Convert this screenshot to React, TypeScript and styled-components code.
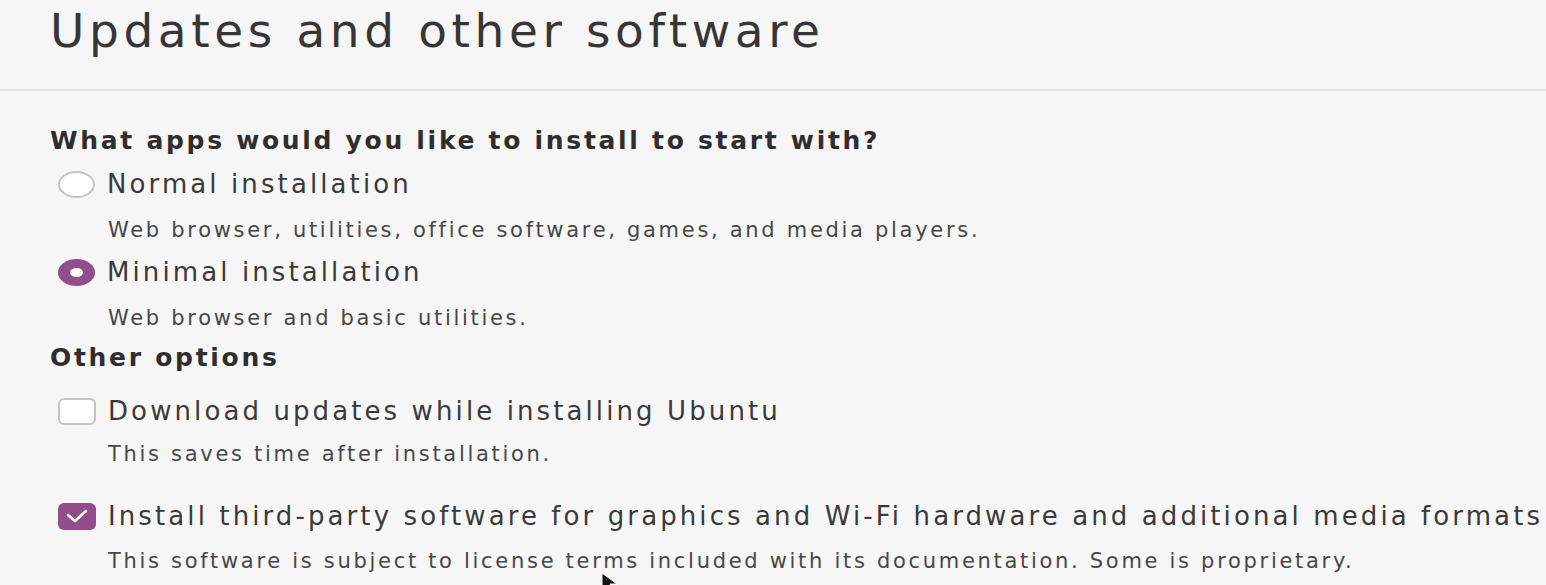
import styled, { createGlobalStyle } from "styled-components";

const GlobalStyle = createGlobalStyle`
  html, body {
    margin: 0;
    padding: 0;
    background: #f6f6f6;
  }
  body {
    font-family: "DejaVu Sans", "Noto Sans", sans-serif;
    color: #3c3c3c;
    overflow: hidden;
  }
`;

const Page = styled.div`
  width: 1546px;
  height: 585px;
  overflow: hidden;
  position: relative;
`;

const Header = styled.header`
  height: 89px;
  border-bottom: 2px solid #e2e2e2;
  padding-left: 50px;
`;

const Title = styled.h1`
  margin: 0;
  font-size: 47px;
  font-weight: 400;
  line-height: 62px;
  letter-spacing: 4.6px;
  color: #363636;
  white-space: nowrap;
`;

const Body = styled.main`
  padding-left: 50px;
  padding-top: 30px;
`;

const SectionTitle = styled.h2<{ $gap?: number }>`
  margin: ${(p) => p.$gap ?? 0}px 0 0;
  font-size: 25px;
  font-weight: 700;
  line-height: 40px;
  letter-spacing: 2.7px;
  color: #2e2e2e;
  white-space: nowrap;
`;

const OptionRow = styled.label<{ $gap?: number }>`
  display: flex;
  align-items: center;
  gap: 12px;
  height: 40px;
  margin-top: ${(p) => p.$gap ?? 0}px;
  padding-left: 8px;
`;

const OptionText = styled.span`
  font-size: 26px;
  line-height: 40px;
  letter-spacing: 3.1px;
  color: #3a3a3a;
  white-space: nowrap;
`;

const Hint = styled.p<{ $gap?: number }>`
  margin: ${(p) => p.$gap ?? 0}px 0 0 58px;
  font-size: 21px;
  line-height: 40px;
  letter-spacing: 2.7px;
  color: #474747;
  white-space: nowrap;
`;

const Radio = styled.span<{ $on?: boolean }>`
  flex: none;
  box-sizing: border-box;
  width: 37px;
  height: 27px;
  border-radius: 50%;
  display: grid;
  place-items: center;
  background: ${(p) => (p.$on ? "#924d8b" : "#ffffff")};
  border: ${(p) => (p.$on ? "none" : "2px solid #c4c4c4")};

  &::after {
    content: "";
    display: ${(p) => (p.$on ? "block" : "none")};
    width: 13px;
    height: 9px;
    border-radius: 50%;
    background: #ffffff;
  }
`;

const Box = styled.span<{ $on?: boolean }>`
  flex: none;
  box-sizing: border-box;
  width: 38px;
  height: 27px;
  border-radius: 6px;
  display: grid;
  place-items: center;
  background: ${(p) => (p.$on ? "#924d8b" : "#ffffff")};
  border: ${(p) => (p.$on ? "none" : "2px solid #c4c4c4")};
`;

const Cursor = styled.svg`
  position: absolute;
  left: 601px;
  top: 572px;
`;

const Check = () => (
  <svg width="24" height="16" viewBox="0 0 24 16">
    <polyline
      points="3,7 10,13 21,3"
      fill="none"
      stroke="#ffffff"
      strokeWidth="2.6"
      strokeLinecap="round"
      strokeLinejoin="round"
    />
  </svg>
);

export default function App() {
  return (
    <Page>
      <GlobalStyle />
      <Header>
        <Title>Updates and other software</Title>
      </Header>
      <Body>
        <SectionTitle>What apps would you like to install to start with?</SectionTitle>
        <OptionRow $gap={3}>
          <Radio />
          <OptionText>Normal installation</OptionText>
        </OptionRow>
        <Hint $gap={6}>Web browser, utilities, office software, games, and media players.</Hint>
        <OptionRow $gap={2}>
          <Radio $on />
          <OptionText>Minimal installation</OptionText>
        </OptionRow>
        <Hint $gap={6}>Web browser and basic utilities.</Hint>
        <SectionTitle>Other options</SectionTitle>
        <OptionRow $gap={13}>
          <Box />
          <OptionText>Download updates while installing Ubuntu</OptionText>
        </OptionRow>
        <Hint $gap={3}>This saves time after installation.</Hint>
        <OptionRow $gap={22}>
          <Box $on>
            <Check />
          </Box>
          <OptionText>
            Install third-party software for graphics and Wi-Fi hardware and additional media formats
          </OptionText>
        </OptionRow>
        <Hint $gap={5}>This software is subject to license terms included with its documentation. Some is proprietary.</Hint>
      </Body>
      <Cursor width="18" height="20" viewBox="0 0 18 20">
        <path d="M1 1 L1 19 L6 14 L10 20 L13 18 L9 12 L16 12 Z" fill="#111" stroke="#fff" strokeWidth="1" />
      </Cursor>
    </Page>
  );
}
